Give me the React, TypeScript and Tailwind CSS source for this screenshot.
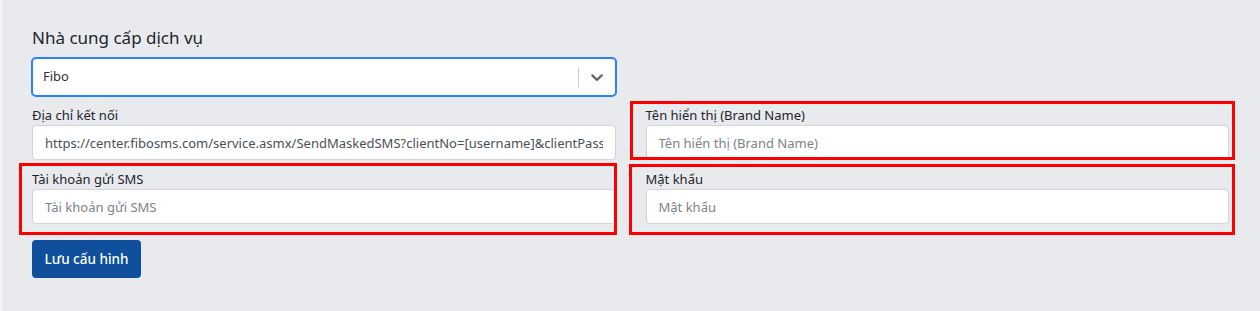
import React from "react";

const font = { fontFamily: '"Noto Sans", "Open Sans", sans-serif' };

export default function App() {
  return (
    <div
      className="relative w-[1260px] h-[311px] bg-[#e9eaee] border-l-[2px] border-[#f4f5f7] text-[#212529]"
      style={font}
    >
      <div className="pl-[30px] pr-[31px] pt-[24px]">
        <div className="grid grid-cols-2 gap-x-[30px]">
          <div>
            <h3 className="text-[17px] leading-[27px] mb-[7px] font-normal">Nhà cung cấp dịch vụ</h3>
            <div className="flex items-center h-[38px] bg-white border border-[#2684ff] shadow-[0_0_0_1px_#2684ff] rounded-[4px]">
              <div className="flex-1 pl-[10px] text-[13px] text-[#333]">Fibo</div>
              <span className="w-px h-[20px] bg-[#ccc]"></span>
              <div className="px-[8px] text-[#666] flex items-center">
                <svg width="20" height="20" viewBox="0 0 20 20" fill="currentColor">
                  <path d="M4.516 7.548c0.436-0.446 1.043-0.481 1.576 0l3.908 3.747 3.908-3.747c0.533-0.481 1.141-0.446 1.574 0 0.436 0.445 0.408 1.197 0 1.615-0.406 0.418-4.695 4.502-4.695 4.502-0.217 0.223-0.502 0.335-0.787 0.335s-0.57-0.112-0.789-0.335c0 0-4.287-4.084-4.695-4.502s-0.436-1.17 0-1.615z" />
                </svg>
              </div>
            </div>
          </div>
          <div></div>

          <Field
            label="Địa chỉ kết nối"
            value="https://center.fibosms.com/service.asmx/SendMaskedSMS?clientNo=[username]&clientPass=[password]&senderName=[brandname]"
          />
          <Field label="Tên hiển thị (Brand Name)" placeholder="Tên hiển thị (Brand Name)" />
          <Field label="Tài khoản gửi SMS" placeholder="Tài khoản gửi SMS" />
          <Field label="Mật khẩu" placeholder="Mật khẩu" />
        </div>
        <button className="mt-[16px] h-[38px] w-[109px] rounded-[4px] bg-[#0f4f9c] text-white text-[13.5px] font-medium">
          Lưu cấu hình
        </button>
      </div>

      <div className="absolute left-[17px] top-[163px] w-[598px] h-[72px] border-[3px] border-[#ff0000] pointer-events-none"></div>
      <div className="absolute left-[628px] top-[101px] w-[605px] h-[59px] border-[3px] border-[#ff0000] pointer-events-none"></div>
      <div className="absolute left-[627px] top-[164px] w-[606px] h-[71px] border-[3px] border-[#ff0000] pointer-events-none"></div>
    </div>
  );
}

function Field({ label, value, placeholder }: { label: string; value?: string; placeholder?: string }) {
  return (
    <div className="mt-[9px]">
      <label className="block text-[13px] leading-[20px] text-[#212529]">{label}</label>
      <input
        readOnly
        value={value ?? ""}
        placeholder={placeholder}
        className="block w-full h-[35px] px-[12px] bg-white border border-[#ced4da] rounded-[4px] text-[13px] text-[#495057] placeholder:text-[#7d838a] outline-none"
        style={font}
      />
    </div>
  );
}
